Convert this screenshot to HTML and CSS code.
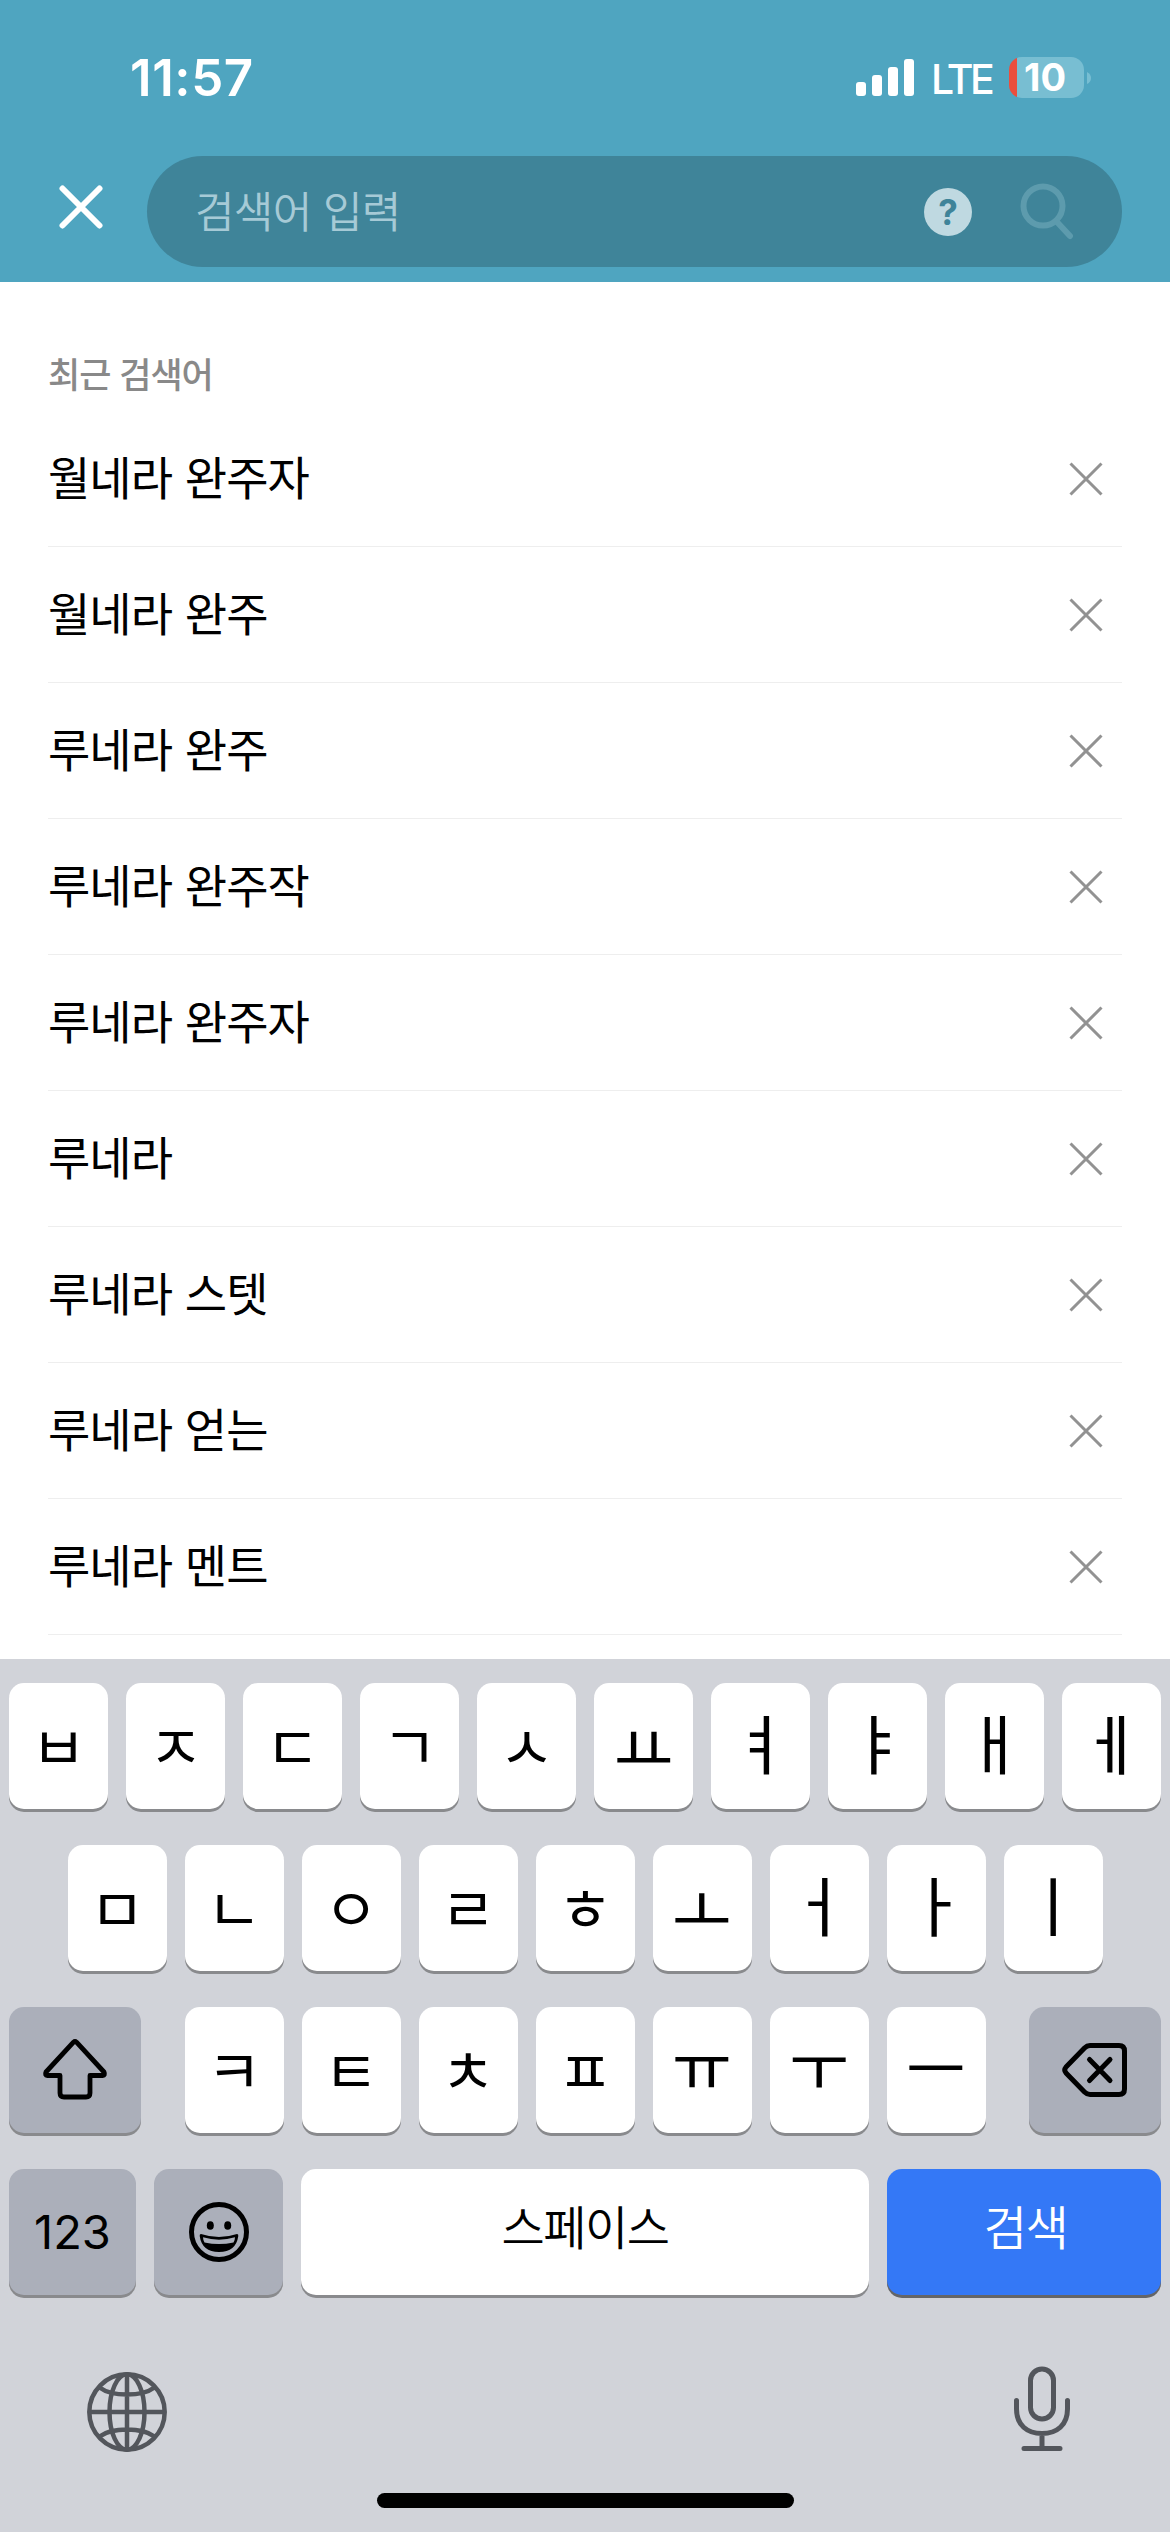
FILE: index.html
```html
<!DOCTYPE html>
<html lang="ko">
<head>
<meta charset="utf-8">
<title>검색</title>
<link rel="stylesheet" href="styles.css">
</head>
<body>
<svg class="defs" width="0" height="0">
  <symbol id="remove" viewBox="0 0 34 34"><path d="M1.500 1.500 32.500 32.500M32.500 1.500 1.500 32.500" fill="none" stroke="#929292" stroke-width="3"/></symbol>
</svg>
<div class="screen">
  <header class="header">
    <div class="status">
      <span class="time">11:57</span>
      <div class="indicators">
        <svg class="signal" viewBox="0 0 58 38" fill="#fff"><rect x="0" y="23" width="10" height="14" rx="3"/><rect x="16" y="16" width="10" height="21" rx="3"/><rect x="32" y="8" width="10" height="29" rx="3"/><rect x="48" y="0" width="10" height="37" rx="3"/></svg>
        <span class="network">LTE</span>
        <span class="battery">10</span>
        <svg class="nub" viewBox="0 0 4 12"><path d="M0 0Q4 2 4 6T0 12Z" fill="#78bed2"/></svg>
      </div>
    </div>
    <div class="searchbar">
      <svg class="close" viewBox="0 0 44 44"><path d="M3.500 3.500 40.500 40.500M40.500 3.500 3.500 40.500" stroke="#fff" stroke-width="6" stroke-linecap="round"/></svg>
      <div class="field">
        <span class="placeholder">검색어 입력</span>
        <span class="help">?</span>
        <svg class="search" viewBox="0 0 54 60"><g fill="none" stroke="#5d9bad" stroke-width="6"><circle cx="23" cy="23" r="19.500"/><path d="M37 39 50 53" stroke-linecap="round"/></g></svg>
      </div>
    </div>
  </header>
  <main class="recent">
    <h2 class="label">최근 검색어</h2>
    <ul class="list">
      <li class="item"><span>월네라 완주자</span><svg class="x"><use href="#remove"/></svg></li>
      <li class="item"><span>월네라 완주</span><svg class="x"><use href="#remove"/></svg></li>
      <li class="item"><span>루네라 완주</span><svg class="x"><use href="#remove"/></svg></li>
      <li class="item"><span>루네라 완주작</span><svg class="x"><use href="#remove"/></svg></li>
      <li class="item"><span>루네라 완주자</span><svg class="x"><use href="#remove"/></svg></li>
      <li class="item"><span>루네라</span><svg class="x"><use href="#remove"/></svg></li>
      <li class="item"><span>루네라 스텟</span><svg class="x"><use href="#remove"/></svg></li>
      <li class="item"><span>루네라 얻는</span><svg class="x"><use href="#remove"/></svg></li>
      <li class="item"><span>루네라 멘트</span><svg class="x"><use href="#remove"/></svg></li>
    </ul>
  </main>
  <section class="keyboard">
    <div class="row"><b class="key c">ㅂ</b><b class="key c">ㅈ</b><b class="key c">ㄷ</b><b class="key c">ㄱ</b><b class="key c">ㅅ</b><b class="key low">ㅛ</b><b class="key">ㅕ</b><b class="key">ㅑ</b><b class="key">ㅐ</b><b class="key">ㅔ</b></div>
    <div class="row"><b class="key c">ㅁ</b><b class="key c">ㄴ</b><b class="key c">ㅇ</b><b class="key c">ㄹ</b><b class="key c">ㅎ</b><b class="key low">ㅗ</b><b class="key">ㅓ</b><b class="key">ㅏ</b><b class="key">ㅣ</b></div>
    <div class="row spread">
      <div class="key gray side"><svg width="66" height="66" viewBox="0 0 66 66"><path d="M31.500 5.200Q33 3.800 34.500 5.200L62 35Q63.500 38.200 60.500 38.500H48V56Q48 60 44 60H22Q18 60 18 56V38.500H5.500Q2.500 38.200 4 35Z" fill="none" stroke="#000" stroke-width="4.800" stroke-linejoin="round"/></svg></div>
      <div class="letters"><b class="key c">ㅋ</b><b class="key c">ㅌ</b><b class="key c">ㅊ</b><b class="key c">ㅍ</b><b class="key high">ㅠ</b><b class="key high">ㅜ</b><b class="key">ㅡ</b></div>
      <div class="key gray side"><svg width="66" height="56" viewBox="0 0 66 56"><g fill="none" stroke="#000" stroke-width="5" stroke-linecap="round" stroke-linejoin="round"><path d="M28 3.500H57Q62.500 3.500 62.500 9V47Q62.500 52.500 57 52.500H28Q25 52.500 22.500 50L4 31Q1.500 28 4 25L22.500 6Q25 3.500 28 3.500Z"/><path d="M27.500 17.500 48 38.500M48 17.500 27.500 38.500"/></g></svg></div>
    </div>
    <div class="row bottom">
      <div class="key gray num">123</div>
      <div class="key gray emoji"><svg width="60" height="60" viewBox="0 0 60 60"><circle cx="30" cy="30" r="27.500" fill="none" stroke="#000" stroke-width="5"/><ellipse cx="21.300" cy="23.500" rx="3.500" ry="4.300"/><ellipse cx="38.700" cy="23.500" rx="3.500" ry="4.300"/><path d="M12 32Q30 38 48 32Q49.500 32 49.300 34Q47 50 30 50T10.700 34Q10.500 32 12 32Z"/><path d="M14 35.300Q30 40 46 35.300Q46 38 44.500 40.500Q30 43.500 15.500 40.500Q14 38 14 35.300Z" fill="#abafba"/></svg></div>
      <div class="key space"><span>스페이스</span></div>
      <div class="key go"><span>검색</span></div>
    </div>
    <div class="tools">
      <svg width="80" height="80" viewBox="0 0 80 80"><g fill="none" stroke="#53565c" stroke-width="4.500"><circle cx="40" cy="40" r="37.700"/><ellipse cx="40" cy="40" rx="17.500" ry="37.700"/><path d="M40 2V78M2 40H78M12.500 15.500Q22 22.500 40 22.500T67.500 15.500M12.500 64.500Q22 57.500 40 57.500T67.500 64.500"/></g></svg>
      <svg width="56" height="86" viewBox="0 0 56 86"><g fill="none" stroke="#53565c" stroke-width="5" stroke-linecap="round"><rect x="16.500" y="3" width="23" height="50" rx="11.500"/><path d="M2.500 34.500V43C2.500 59 13 67.500 28 67.500S53.500 59 53.500 43V34.500M28 68V82M10 82.500H46"/></g></svg>
    </div>
    <div class="home"></div>
  </section>
</div>
</body>
</html>
```

FILE: styles.css
```css
* { box-sizing: border-box; }
body { margin: 0; font-family: Inter, "Noto Sans CJK KR", sans-serif; color: #000; }
svg { display: block; flex: none; }
.defs { position: absolute; }
.screen { width: 1170px; height: 2532px; display: flex; flex-direction: column; background: #fff; overflow: hidden; }

.header { height: 282px; background: #4fa5c0; color: #fff; }
.status { height: 156px; display: flex; justify-content: space-between; padding: 0 79px 0 130px; }
.time { font-size: 51px; font-weight: 600; line-height: 60px; margin-top: 48px; letter-spacing: .6px; }
.indicators { display: flex; margin-top: 57px; height: 41px; align-items: center; }
.signal { width: 58px; height: 38px; margin-right: 17px; }
.network { font-size: 41px; font-weight: 500; line-height: 41px; width: 78px; letter-spacing: -3.500px; margin-top: 3px; }
.battery { width: 75px; height: 41px; border-radius: 13px; background: linear-gradient(90deg, #eb4e3d 8px, #78bed2 8px); font-size: 38px; line-height: 41px; font-weight: 700; padding-left: 15px; letter-spacing: 0; }
.nub { width: 4px; height: 12px; margin-left: 3px; }
.searchbar { display: flex; padding: 0 48px 0 59px; }
.close { width: 44px; height: 44px; margin: 29px 44px 0 0; }
.field { flex: 1; height: 111px; border-radius: 56px; background: #3f8499; display: flex; align-items: center; padding: 0 48px 0 48px; }
.placeholder { flex: 1; font-family: "Noto Sans CJK KR", sans-serif; font-size: 43px; line-height: 60px; font-weight: 350; color: #a6cad6; letter-spacing: -.7px; padding-bottom: 5px; }
.help { width: 48px; height: 48px; border-radius: 50%; background: #bfd9e1; color: #3f8499; font-size: 35px; line-height: 48px; font-weight: 700; text-align: center; margin-right: 48px; }
.search { width: 54px; height: 60px; margin-top: 3px; }

.recent { height: 1377px; font-family: "Noto Sans CJK KR", sans-serif; padding: 0 48px; }
.label { margin: 0; height: 129px; padding-top: 66px; font-size: 35px; line-height: 50px; font-weight: 500; color: #898989; letter-spacing: -1px; }
.list { margin: 0; padding: 0; list-style: none; }
.item { height: 136px; display: flex; justify-content: space-between; align-items: center; padding-right: 19px; border-bottom: 1px solid #eee; font-size: 46px; line-height: 68px; letter-spacing: -1px; word-spacing: 1px; }
.item span { padding-bottom: 7px; }
.x { width: 34px; height: 34px; }

.keyboard { flex: 1; background: #d1d3d9; padding: 24px 9px 0; font-family: Inter, "Noto Sans CJK KR", sans-serif; }
.row { display: flex; justify-content: center; gap: 18px; height: 126px; margin-bottom: 36px; }
.spread { justify-content: space-between; gap: 0; }
.letters { display: flex; gap: 18px; }
.key { width: 99px; height: 126px; border-radius: 15px; background: #fff; box-shadow: 0 3px 0 #898a8d; display: flex; align-items: center; justify-content: center; font-size: 65px; line-height: 90px; font-weight: 400; }
.c { font-size: 60px; padding-top: 4px; }
.low { padding-top: 8px; }
.high { padding-bottom: 5px; }
.gray { background: #abafba; }
.side { width: 132px; }
.num { width: 127px; font-size: 47px; }
.emoji { width: 129px; }
.space { width: 568px; }
.go { width: 274px; background: #3478f6; color: #fff; box-shadow: 0 3px 0 #646568; }
.space, .go { font-size: 47px; font-weight: 350; letter-spacing: -1.500px; padding-bottom: 9px; }
.go { padding-left: 3px; }
.tools { height: 162px; display: flex; justify-content: space-between; padding: 35px 91px 0 78px; }
.tools svg:first-child { margin-top: 6px; }
.home { width: 417px; height: 15px; border-radius: 8px; background: #000; margin: 0 auto; }
```
